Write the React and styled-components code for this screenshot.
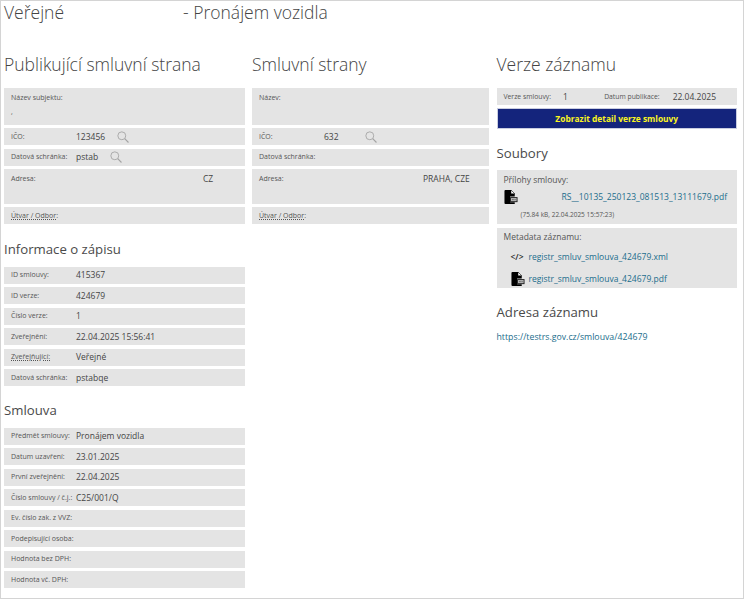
import React from 'react';
import styled, { createGlobalStyle } from 'styled-components';

const GlobalStyle = createGlobalStyle`
  html, body {
    margin: 0;
    padding: 0;
    background: #fff;
    font-family: "Open Sans", "Liberation Sans", sans-serif;
    color: #444;
  }
`;

const SearchIcon = () => (
  <SearchSvg viewBox="0 0 14 14" fill="none" stroke="#a3a3a3" strokeWidth="1">
    <circle cx="5.6" cy="5.6" r="4.6" />
    <path d="M9 9l4.4 4.4" strokeWidth="1.3" />
  </SearchSvg>
);

const PdfIcon = () => (
  <FileSvg viewBox="0 0 14 15">
    <path d="M1 0h6l4 4v3H6v6h5v2H1a1 1 0 0 1-1-1V1a1 1 0 0 1 1-1z" fill="#000" />
    <path d="M7 0v4h4z" fill="#fff" stroke="#000" strokeWidth=".5" />
    <rect x="6" y="7.6" width="8" height="5.4" fill="#222" />
    <rect x="7" y="8.6" width="6" height="3.4" fill="#b5b5b5" />
    <path d="M8 10.3h4" stroke="#333" strokeWidth=".7" strokeDasharray="1 .5" />
  </FileSvg>
);

const Row = ({ label, value, underline, icon }) => (
  <RowBox>
    <Label $underline={underline} $width={65}>{label}</Label>
    {value && <Value>{value}</Value>}
    {icon && <IconSlot $left={icon}><SearchIcon /></IconSlot>}
  </RowBox>
);

const App = () => {
  return (
    <React.Fragment>
      <GlobalStyle />
      <Page>
        <Title>
          <span>Veřejné</span>
          <TitleRest>- Pronájem vozidla</TitleRest>
        </Title>
        <Columns>
          <Column>
            <Heading>Publikující smluvní strana</Heading>
            <RowList>
              <SubjectBox>
                <Label>Název subjektu:</Label>
                <Label>,</Label>
              </SubjectBox>
              <Row label="IČO:" value="123456" icon={12} />
              <Row label="Datová schránka:" value="pstab" icon={12} />
              <AddressBox>
                <Label $width={65}>Adresa:</Label>
                <AddressValue $left={127}>CZ</AddressValue>
              </AddressBox>
              <Row label="Útvar / Odbor:" underline />
            </RowList>
            <SubHeading $top={15} $bottom={7.5}>Informace o zápisu</SubHeading>
            <RowList>
              <Row label="ID smlouvy:" value="415367" />
              <Row label="ID verze:" value="424679" />
              <Row label="Číslo verze:" value="1" />
              <Row label="Zveřejnění:" value="22.04.2025 15:56:41" />
              <Row label="Zveřejňující:" value="Veřejné" underline />
              <Row label="Datová schránka:" value="pstabqe" />
            </RowList>
            <SubHeading $top={13.5} $bottom={8}>Smlouva</SubHeading>
            <RowList>
              <Row label="Předmět smlouvy:" value="Pronájem vozidla" />
              <Row label="Datum uzavření:" value="23.01.2025" />
              <Row label="První zveřejnění:" value="22.04.2025" />
              <Row label="Číslo smlouvy / č.j.:" value="C25/001/Q" />
              <Row label="Ev. číslo zak. z VVZ:" />
              <Row label="Podepisující osoba:" />
              <Row label="Hodnota bez DPH:" />
              <Row label="Hodnota vč. DPH:" />
            </RowList>
          </Column>
          <Column>
            <Heading>Smluvní strany</Heading>
            <RowList>
              <SubjectBox>
                <Label>Název:</Label>
              </SubjectBox>
              <Row label="IČO:" value="632" icon={26} />
              <Row label="Datová schránka:" />
              <AddressBox>
                <Label $width={65}>Adresa:</Label>
                <AddressValue $left={99}>PRAHA, CZE</AddressValue>
              </AddressBox>
              <Row label="Útvar / Odbor:" underline />
            </RowList>
          </Column>
          <RightColumn>
            <Heading>Verze záznamu</Heading>
            <VersionBar>
              <VersionLabel>Verze smlouvy:</VersionLabel>
              <Value>1</Value>
              <VersionDate>
                <VersionLabel>Datum publikace:</VersionLabel>
                <Value>22.04.2025</Value>
              </VersionDate>
            </VersionBar>
            <DetailButton>Zobrazit detail verze smlouvy</DetailButton>
            <SubHeading $top={14} $bottom={7}>Soubory</SubHeading>
            <FilesBox>
              <FilesTitle>Přílohy smlouvy:</FilesTitle>
              <AttachmentRow>
                <PdfIcon />
                <FileLink>RS__10135_250123_081513_13111679.pdf</FileLink>
              </AttachmentRow>
              <FileMeta>(75.84 kB, 22.04.2025 15:57:23)</FileMeta>
            </FilesBox>
            <MetaBox>
              <MetaTitle>Metadata záznamu:</MetaTitle>
              <MetaRow>
                <CodeGlyph>&lt;/&gt;</CodeGlyph>
                <FileLink>registr_smluv_smlouva_424679.xml</FileLink>
              </MetaRow>
              <MetaRow>
                <PdfIcon />
                <FileLink>registr_smluv_smlouva_424679.pdf</FileLink>
              </MetaRow>
            </MetaBox>
            <SubHeading $top={14} $bottom={8}>Adresa záznamu</SubHeading>
            <RecordLink>https://testrs.gov.cz/smlouva/424679</RecordLink>
          </RightColumn>
        </Columns>
      </Page>
    </React.Fragment>
  );
};

const Page = styled.div`
  box-sizing: border-box;
  width: 744px;
  height: 599px;
  overflow: hidden;
  border: 1px solid #d4d4d4;
  padding: 0 6px 0 3px;
`;

const Title = styled.div`
  display: flex;
  height: 22px;
  font-size: 17.5px;
  line-height: 22px;
  font-weight: 300;
  color: #444;
`;

const TitleRest = styled.span`
  margin-left: 119px;
`;

const Columns = styled.div`
  display: grid;
  grid-template-columns: 241px 237px 241px;
  column-gap: 7px;
  margin-top: 28px;
`;

const Column = styled.div`
  min-width: 0;
`;

const RightColumn = styled(Column)`
  margin-left: 0.5px;
`;

const Heading = styled.h2`
  margin: 0 0 11px;
  height: 26px;
  font-size: 17.5px;
  line-height: 26px;
  font-weight: 300;
  color: #444;
`;

const SubHeading = styled.h3`
  margin: ${p => p.$top}px 0 ${p => p.$bottom}px;
  height: 20px;
  font-size: 13.2px;
  line-height: 20px;
  font-weight: 400;
  color: #4a4a4a;
`;

const RowList = styled.div`
  display: flex;
  flex-direction: column;
  gap: 3.5px;
`;

const RowBox = styled.div`
  display: flex;
  align-items: center;
  height: 17px;
  padding-left: 7px;
  background: #e4e4e4;
`;

const Label = styled.span`
  flex: none;
  display: block;
  ${p => p.$width && `width: ${p.$width}px;`}
  font-size: 7px;
  line-height: 12px;
  white-space: nowrap;
  color: #555;
  ${p => p.$underline && 'text-decoration: underline dotted;'}
`;

const VersionLabel = styled.span`
  flex: none;
  font-size: 6.8px;
  line-height: 12px;
  white-space: nowrap;
  color: #555;
`;

const Value = styled.span`
  font-size: 8.5px;
  line-height: 12px;
  white-space: nowrap;
  color: #444;
`;

const IconSlot = styled.span`
  display: flex;
  margin-left: ${p => p.$left}px;
`;

const SearchSvg = styled.svg`
  width: 12px;
  height: 12px;
`;

const FileSvg = styled.svg`
  flex: none;
  width: 14px;
  height: 14px;
`;

const SubjectBox = styled.div`
  box-sizing: border-box;
  height: 36.5px;
  padding: 4px 7px;
  background: #e4e4e4;
  display: flex;
  flex-direction: column;
  gap: 2px;
`;

const AddressBox = styled.div`
  box-sizing: border-box;
  display: flex;
  height: 34.5px;
  padding: 4px 7px;
  background: #e4e4e4;
`;

const AddressValue = styled.span`
  margin-left: ${p => p.$left}px;
  font-size: 8.5px;
  line-height: 12px;
  color: #444;
`;

const VersionBar = styled.div`
  display: flex;
  align-items: center;
  gap: 12px;
  height: 17px;
  padding-left: 7px;
  background: #e4e4e4;
`;

const VersionDate = styled.div`
  display: flex;
  align-items: center;
  margin-left: auto;
  padding-right: 21px;
  gap: 13px;
`;

const DetailButton = styled.div`
  box-sizing: border-box;
  height: 21px;
  margin-top: 3px;
  border: 1px solid #c9cde0;
  background: #14247c;
  color: #fbf51e;
  font-size: 8.4px;
  font-weight: 700;
  line-height: 19px;
  text-align: center;
`;

const FilesBox = styled.div`
  box-sizing: border-box;
  height: 54px;
  padding: 3px 7px;
  background: #e4e4e4;
`;

const FilesTitle = styled.div`
  font-size: 8.5px;
  line-height: 14px;
  color: #555;
`;

const MetaTitle = styled(FilesTitle)`
  margin-bottom: 2px;
`;

const AttachmentRow = styled.div`
  display: flex;
  align-items: center;
  justify-content: space-between;
  padding: 3px 3px 0 0;
`;

const FileLink = styled.a`
  font-size: 8.5px;
  line-height: 14px;
  color: #1b6d8c;
  white-space: nowrap;
`;

const FileMeta = styled.div`
  padding: 6px 0 0 17px;
  font-size: 6.5px;
  line-height: 10px;
  color: #555;
`;

const MetaBox = styled.div`
  box-sizing: border-box;
  height: 60px;
  margin-top: 3.5px;
  padding: 2px 7px;
  background: #e4e4e4;
`;

const MetaRow = styled.div`
  display: flex;
  align-items: center;
  gap: 4px;
  height: 22px;
  padding-left: 7px;
`;

const CodeGlyph = styled.span`
  width: 14px;
  font-size: 8.5px;
  font-weight: 600;
  color: #222;
  white-space: nowrap;
`;

const RecordLink = styled.div`
  font-size: 8.75px;
  line-height: 14px;
  color: #1b6d8c;
`;

export default App;
